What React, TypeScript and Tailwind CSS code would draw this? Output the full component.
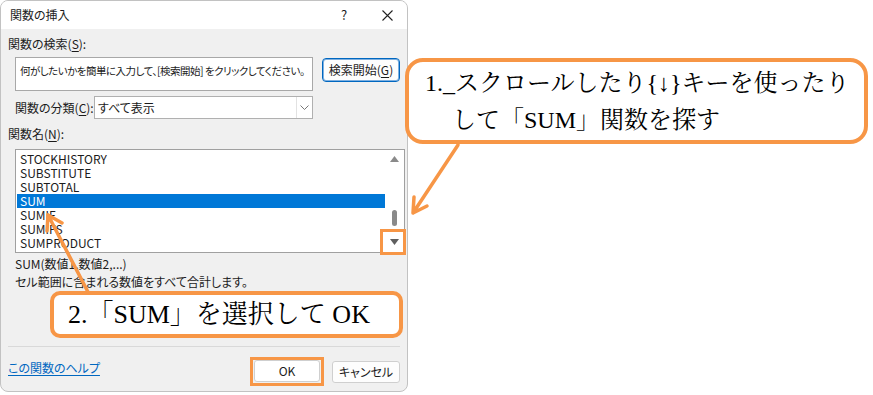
import React from "react";

const items = [
  "STOCKHISTORY",
  "SUBSTITUTE",
  "SUBTOTAL",
  "SUM",
  "SUMIF",
  "SUMIFS",
  "SUMPRODUCT",
];

const uiFont = "font-['Noto_Sans_CJK_JP','Noto_Sans',sans-serif] [font-feature-settings:'palt']";
const noteFont =
  "font-['Liberation_Serif','Noto_Serif_CJK_JP','Noto_Sans_CJK_JP',serif]";

const Mnemonic = ({ label, k }: { label: string; k: string }) => (
  <span>
    {label}(<span className="underline underline-offset-2">{k}</span>):
  </span>
);

const Dialog = () => {
  return (
    <div
      className={`flex h-[392px] w-[408px] flex-col overflow-hidden rounded-[8px] border border-[#c2c2c2] bg-[#f0f0f0] text-[12px] text-[#1b1b1b] ${uiFont}`}
    >
      {/* title bar */}
      <div className="flex h-[28px] shrink-0 items-center bg-white pl-[9px]">
        <span>関数の挿入</span>
        <span className="ml-auto w-[20px] text-center text-[13px]">?</span>
        <span className="ml-[13px] flex w-[40px] justify-center">
          <svg width="11" height="11" viewBox="0 0 11 11">
            <path d="M0.5 0.5 L10.5 10.5 M10.5 0.5 L0.5 10.5" stroke="#222" strokeWidth="1.1" />
          </svg>
        </span>
      </div>

      <div className="flex flex-1 flex-col pl-[7px]">
        <div className="mt-[7px] leading-[16px]">
          <Mnemonic label="関数の検索" k="S" />
        </div>

        <div className="mt-[5px] flex items-start">
          <div className="ml-[7px] h-[34px] w-[298px] whitespace-nowrap border border-[#a8a8a8] bg-white pl-[4px] pt-[5px] text-[10.5px] leading-[16px] tracking-[-0.5px]">
            何がしたいかを簡単に入力して、[検索開始] をクリックしてください。
          </div>
          <button className="ml-[9px] mt-[1px] h-[24px] w-[78px] rounded-[4px] border border-[#0067c0] bg-[#fdfdfd] leading-[16px] shadow-[inset_0_0_0_1px_#7fb0e0]">
            検索開始(<span className="underline underline-offset-2">G</span>)
          </button>
        </div>

        <div className="ml-[7px] mt-[5px] flex h-[23px] items-center">
          <span className="w-[79px]">
            <Mnemonic label="関数の分類" k="C" />
          </span>
          <div className="flex h-[23px] w-[219px] items-center border border-[#b0b0b0] bg-white">
            <span className="flex-1 pl-[3px]">すべて表示</span>
            <span className="flex h-full w-[16px] items-center justify-center border-l border-[#e2e2e2]">
              <svg width="9" height="5" viewBox="0 0 9 5">
                <path d="M0.5 0.5 L4.5 4.5 L8.5 0.5" fill="none" stroke="#777" strokeWidth="1" />
              </svg>
            </span>
          </div>
        </div>

        <div className="mt-[7px] leading-[16px]">
          <Mnemonic label="関数名" k="N" />
        </div>

        <div className="ml-[7px] mt-[7px] flex h-[104px] w-[390px] border border-[#a0a0a0] bg-white">
          <div className="flex-1 pt-[2px]">
            {items.map((it) => (
              <div
                key={it}
                className={
                  it === "SUM"
                    ? "ml-[1px] h-[14px] bg-[#0078d7] pl-[3px] leading-[14px] text-white"
                    : "ml-[1px] h-[14px] pl-[3px] leading-[14px]"
                }
              >
                {it}
              </div>
            ))}
          </div>
          <div className="flex w-[19px] flex-col items-center">
            <svg className="mt-[6px]" width="9" height="6" viewBox="0 0 9 6">
              <path d="M4.5 0 L9 6 L0 6 Z" fill="#8a8a8a" />
            </svg>
            <div className="flex-1" />
            <div className="mb-[13px] h-[16px] w-[5px] rounded-full bg-[#8a8a8a]" />
            <svg className="mb-[7px]" width="9" height="6" viewBox="0 0 9 6">
              <path d="M0 0 L9 0 L4.5 6 Z" fill="#5f5f5f" />
            </svg>
          </div>
        </div>

        <div className="ml-[7px] mt-[2px] leading-[18px]">SUM(数値1,数値2,...)</div>
        <div className="ml-[7px] leading-[18px]">セル範囲に含まれる数値をすべて合計します。</div>

        <div className="mr-[7px] mt-[55px] h-px bg-[#d9d9d9]" />

        <div className="mt-[13px] flex h-[22px] items-start pr-[7px]">
          <a className="leading-[16px] text-[#0067c0] underline underline-offset-2">この関数のヘルプ</a>
          <button className="ml-auto h-[22px] w-[66px] rounded-[3px] border border-[#cfcfcf] bg-white">OK</button>
          <button className="ml-[12px] mt-[1px] h-[22px] w-[68px] rounded-[3px] border border-[#cfcfcf] bg-[#fdfdfd]">
            キャンセル
          </button>
        </div>
      </div>
    </div>
  );
};

export default function App() {
  return (
    <div className="relative h-[395px] w-[873px] overflow-hidden bg-white">
      <Dialog />

      {/* annotation callouts */}
      <div
        className={`absolute left-[405px] top-[58px] h-[86px] w-[463px] rounded-[18px] border-[4px] border-[#f79646] bg-white pl-[16px] pt-[3px] text-[24px] leading-[37px] text-black ${noteFont}`}
      >
        <div>1._スクロールしたり{"{"}↓{"}"}キーを使ったり</div>
        <div className="pl-[27px]">して「SUM」関数を探す</div>
      </div>

      <div
        className={`absolute left-[50px] top-[291px] flex h-[47px] w-[353px] items-center rounded-[10px] border-[4px] border-[#f79646] bg-white pl-[14px] text-[26px] text-black ${noteFont}`}
      >
        2.「SUM」を選択して OK
      </div>

      <div className="absolute left-[380px] top-[229px] h-[26px] w-[26px] border-[3px] border-[#f79646]" />
      <div className="absolute left-[250px] top-[357px] h-[29px] w-[74px] border-[3px] border-[#f79646]" />

      <svg className="pointer-events-none absolute inset-0" width="873" height="395">
        <g stroke="#f79646" strokeWidth="3.5" strokeLinecap="round" fill="none">
          <path d="M458 145 L413 213 M413 213 L414 197 M413 213 L427 206" />
          <path d="M88 292 L48 215 M48 215 L62 223 M48 215 L47 231" />
        </g>
      </svg>
    </div>
  );
}
